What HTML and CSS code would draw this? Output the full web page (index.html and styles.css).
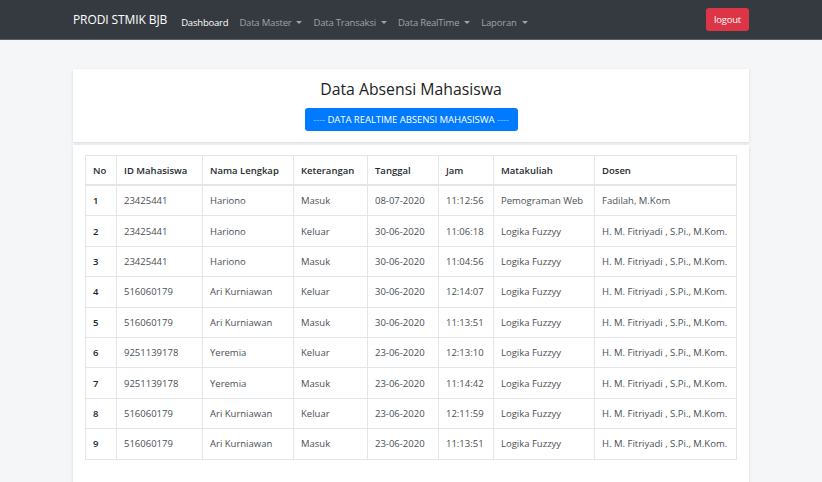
FILE: index.html
```html
<!DOCTYPE html>
<html lang="id">
<head>
  <meta charset="utf-8">
  <title>Data Absensi Mahasiswa</title>
  <link rel="stylesheet" href="styles.css">
</head>
<body>
  <!-- navbar -->
  <nav class="navbar">
    <div class="nav-inner">
      <a class="brand" href="#">PRODI STMIK BJB</a>
      <ul class="nav-links">
        <li><a class="active" href="#">Dashboard</a></li>
        <li><a class="dropdown" href="#">Data Master</a></li>
        <li><a class="dropdown" href="#">Data Transaksi</a></li>
        <li><a class="dropdown" href="#">Data RealTime</a></li>
        <li><a class="dropdown" href="#">Laporan</a></li>
      </ul>
      <a class="btn-logout" href="#">logout</a>
    </div>
  </nav>

  <div class="container">
    <div class="card card-head">
      <h2>Data Absensi Mahasiswa</h2>
      <a class="btn-primary" href="#"><span class="dash">----</span> DATA REALTIME ABSENSI MAHASISWA <span class="dash">----</span></a>
    </div>

    <div class="card card-table">
      <table class="tbl">
        <thead>
          <tr>
            <th class="c-no">No</th>
            <th class="c-id">ID Mahasiswa</th>
            <th class="c-nama">Nama Lengkap</th>
            <th class="c-ket">Keterangan</th>
            <th class="c-tgl">Tanggal</th>
            <th class="c-jam">Jam</th>
            <th class="c-mk">Matakuliah</th>
            <th>Dosen</th>
          </tr>
        </thead>
        <tbody>
          <tr><td class="no">1</td><td>23425441</td><td>Hariono</td><td>Masuk</td><td>08-07-2020</td><td>11:12:56</td><td>Pemograman Web</td><td>Fadilah, M.Kom</td></tr>
          <tr><td class="no">2</td><td>23425441</td><td>Hariono</td><td>Keluar</td><td>30-06-2020</td><td>11:06:18</td><td>Logika Fuzzyy</td><td>H. M. Fitriyadi , S.Pi., M.Kom.</td></tr>
          <tr><td class="no">3</td><td>23425441</td><td>Hariono</td><td>Masuk</td><td>30-06-2020</td><td>11:04:56</td><td>Logika Fuzzyy</td><td>H. M. Fitriyadi , S.Pi., M.Kom.</td></tr>
          <tr><td class="no">4</td><td>516060179</td><td>Ari Kurniawan</td><td>Keluar</td><td>30-06-2020</td><td>12:14:07</td><td>Logika Fuzzyy</td><td>H. M. Fitriyadi , S.Pi., M.Kom.</td></tr>
          <tr><td class="no">5</td><td>516060179</td><td>Ari Kurniawan</td><td>Masuk</td><td>30-06-2020</td><td>11:13:51</td><td>Logika Fuzzyy</td><td>H. M. Fitriyadi , S.Pi., M.Kom.</td></tr>
          <tr><td class="no">6</td><td>9251139178</td><td>Yeremia</td><td>Keluar</td><td>23-06-2020</td><td>12:13:10</td><td>Logika Fuzzyy</td><td>H. M. Fitriyadi , S.Pi., M.Kom.</td></tr>
          <tr><td class="no">7</td><td>9251139178</td><td>Yeremia</td><td>Masuk</td><td>23-06-2020</td><td>11:14:42</td><td>Logika Fuzzyy</td><td>H. M. Fitriyadi , S.Pi., M.Kom.</td></tr>
          <tr><td class="no">8</td><td>516060179</td><td>Ari Kurniawan</td><td>Keluar</td><td>23-06-2020</td><td>12:11:59</td><td>Logika Fuzzyy</td><td>H. M. Fitriyadi , S.Pi., M.Kom.</td></tr>
          <tr><td class="no">9</td><td>516060179</td><td>Ari Kurniawan</td><td>Masuk</td><td>23-06-2020</td><td>11:13:51</td><td>Logika Fuzzyy</td><td>H. M. Fitriyadi , S.Pi., M.Kom.</td></tr>
        </tbody>
      </table>
    </div>
  </div>
</body>
</html>
```

FILE: styles.css
```css
body {
  font-family: "Open Sans", "Noto Sans", sans-serif;
  margin: 0;
  padding: 0;
  background-color: #f5f6f8;
  color: #212529;
}

a {
  text-decoration: none;
}

.navbar {
  background-color: #343a40;
  height: 39px;
  border-bottom: 1px solid #5a5f65;
}

.nav-inner {
  width: 676px;
  margin: 0 auto;
  height: 39px;
  display: flex;
  align-items: center;
}

.brand {
  color: #fff;
  font-size: 12px;
  margin-right: 14px;
  letter-spacing: -0.1px;
}

.nav-links {
  list-style: none;
  margin: 0;
  padding: 0;
  display: flex;
  gap: 11px;
  flex: 1;
}

.nav-links a {
  color: #a0a3a7;
  font-size: 9.5px;
  letter-spacing: -0.2px;
}

.nav-links a.active {
  color: #fff;
}

.nav-links a.dropdown::after {
  content: "";
  display: inline-block;
  margin-left: 5px;
  vertical-align: 2px;
  border-top: 3px solid #a0a3a7;
  border-left: 3px solid transparent;
  border-right: 3px solid transparent;
}

.btn-logout {
  background-color: #dc3545;
  color: #fff;
  font-size: 9.5px;
  width: 43px;
  text-align: center;
  height: 23px;
  line-height: 23px;
  border-radius: 3px;
  letter-spacing: -0.2px;
}

.container {
  width: 676px;
  margin: 29px auto 0;
}

.card {
  background-color: #fff;
  box-shadow: 0 1px 3px rgba(0, 0, 0, 0.12);
}

.card-head {
  height: 73px;
  text-align: center;
  padding-top: 9px;
  box-sizing: border-box;
}

.card-head h2 {
  font-weight: normal;
  font-size: 15.8px;
  margin: 0 0 6px;
  color: #222;
}

.btn-primary {
  display: inline-block;
  background-color: #007bff;
  color: #fff;
  font-size: 9.6px;
  height: 23px;
  line-height: 23px;
  width: 213px;
  border-radius: 3px;
  letter-spacing: -0.1px;
}

.btn-primary .dash {
  color: #8fc2ff;
}

.card-table {
  margin-top: 3px;
  padding: 10px 12px 24px;
  min-height: 310px;
}

.tbl {
  width: 652px;
  table-layout: fixed;
  border-collapse: collapse;
  font-size: 9.5px;
}

.tbl th,
.tbl td {
  border: 1px solid #e3e5e9;
  text-align: left;
  padding: 0 7px;
  white-space: nowrap;
}

.tbl th {
  height: 28px;
  font-weight: 600;
  color: #262b30;
  border-bottom: 2px solid #e3e5e9;
}

.tbl td {
  height: 29.4px;
  color: #4a4f55;
}

.tbl td.no {
  font-weight: 600;
  color: #212529;
}

.c-no { width: 16px; }
.c-id { width: 71px; }
.c-nama { width: 76px; }
.c-ket { width: 59px; }
.c-tgl { width: 56px; }
.c-jam { width: 40px; }
.c-mk { width: 86px; }
```
